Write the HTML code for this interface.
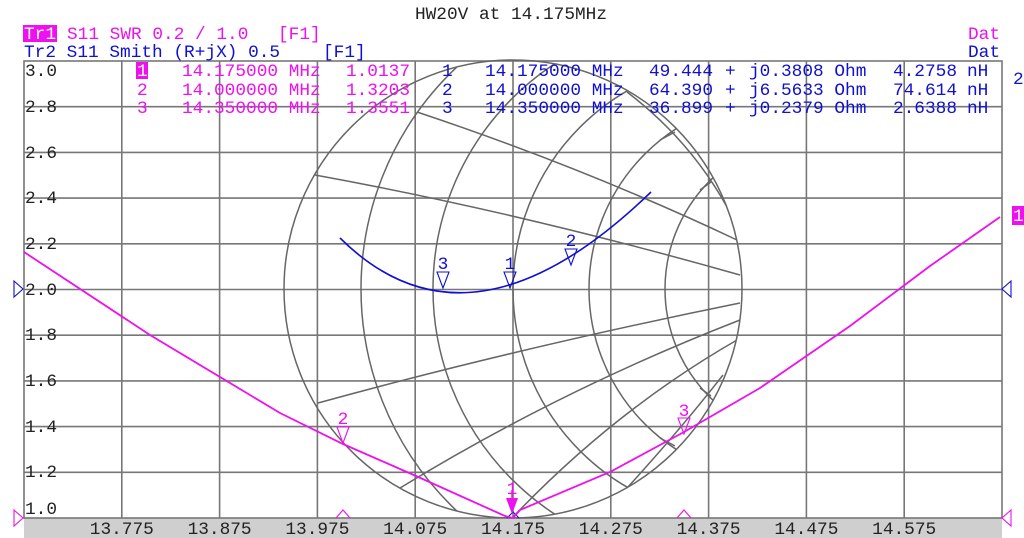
<!DOCTYPE html>
<html><head><meta charset="utf-8"><style>
html,body{margin:0;padding:0;background:#fff;overflow:hidden;}
body{width:1024px;height:538px;overflow:hidden;position:relative;}
svg{position:absolute;left:0;top:0;display:block;overflow:hidden;}
text{font-family:"Liberation Mono",monospace;font-size:17.8px;white-space:pre;}
</style></head><body>
<svg width="1024" height="538" viewBox="0 0 1024 538" xmlns="http://www.w3.org/2000/svg">
<defs><clipPath id="uc"><circle cx="513" cy="289" r="229"/></clipPath></defs>
<rect x="24" y="518" width="978" height="20" fill="#cfcfcf"/>
<g stroke="#777" stroke-width="1.6" fill="none">
<rect x="24" y="61" width="978" height="457"/>
<path d="M24 106.7H1002M24 152.4H1002M24 198.1H1002M24 243.8H1002M24 289.5H1002M24 335.2H1002M24 380.9H1002M24 426.6H1002M24 472.3H1002"/>
<path d="M121.8 61V518M219.6 61V518M317.4 61V518M415.2 61V518M513 61V518M610.8 61V518M708.6 61V518M806.4 61V518M904.2 61V518"/>
</g>
<g stroke="#666" stroke-width="1.5" fill="none">
<circle cx="513" cy="289" r="229"/>
<g clip-path="url(#uc)">
<circle cx="666" cy="289" r="305"/>
<circle cx="702" cy="289" r="269"/>
<circle cx="742" cy="289" r="229"/>
<circle cx="780" cy="289" r="191"/>
<circle cx="818" cy="289" r="153"/>
<path d="M315 175 Q518 212 740 275"/>
<path d="M417 112 Q585 168 737 240"/>
<path d="M627 92 Q690 140 727 207"/>
<path d="M318 403 Q518 348 740 303"/>
<path d="M400 488 Q560 390 740 320"/>
<path d="M513 517 Q615 410 737 340"/>
<path d="M627 488 Q680 430 723 375"/>
<path d="M660 140 L675 132M700 190 L711 182M660 438 L675 446M700 388 L711 396"/>
</g>
</g>
<path d="M340 238 Q470 367 651 192" stroke="#1010d0" stroke-width="1.6" fill="none"/>
<g stroke="#1010d0" stroke-width="1.1" fill="none">
<path d="M437 272 L449 272 L443 288Z"/>
<path d="M504 272 L516 272 L510 288Z"/>
<path d="M565 249 L577 249 L571 265Z"/>
<path d="M14 281 L23 289 L14 297Z"/>
<path d="M1011 281 L1002 289 L1011 297Z"/>
<path d="M507 518 L513 512 L519 518"/>
</g>
<g fill="#1010d0" text-anchor="middle"><text x="443" y="269">3</text><text x="510" y="269">1</text><text x="571" y="246">2</text></g>
<polyline points="24,252 150,335 280,413 343,444 416,476 505,516 513,518 520,510 610,472 684,432 760,388 850,326 930,266 1000,217" stroke="#ee10ee" stroke-width="1.8" fill="none"/>
<g stroke="#ee10ee" stroke-width="1.1" fill="none">
<path d="M337 427 L349 427 L343 443Z"/>
<path d="M678 418 L690 418 L684 434Z"/>
<path d="M14 510 L23 518 L14 526Z"/>
<path d="M1011 510 L1002 518 L1011 526Z"/>
<path d="M336 518 L343 510 L350 518"/>
<path d="M677 518 L684 510 L691 518"/>
</g>
<path d="M506 498 L518 498 L512 514Z" fill="#ee10ee"/>
<line x1="512" y1="490" x2="512" y2="498" stroke="#ee10ee" stroke-width="1.5"/>
<g fill="#ee10ee" text-anchor="middle"><text x="343" y="424">2</text><text x="684" y="416">3</text><text x="512" y="494" font-size="14">1</text></g>
<rect x="1012" y="206" width="12" height="19" fill="#ee10ee"/>
<text x="1013" y="221" fill="#fff">1</text>
<text x="1013" y="84" fill="#1010d0">2</text>
<g fill="#222">
<text x="25" y="76">3.0</text><text x="25" y="112">2.8</text><text x="25" y="158">2.6</text><text x="25" y="203">2.4</text><text x="25" y="249">2.2</text><text x="25" y="295">2.0</text><text x="25" y="340">1.8</text><text x="25" y="386">1.6</text><text x="25" y="432">1.4</text><text x="25" y="477">1.2</text><text x="25" y="514">1.0</text>
</g>
<g fill="#222" text-anchor="middle">
<text x="121.8" y="534">13.775</text><text x="219.6" y="534">13.875</text><text x="317.4" y="534">13.975</text><text x="415.2" y="534">14.075</text><text x="513" y="534">14.175</text><text x="610.8" y="534">14.275</text><text x="708.6" y="534">14.375</text><text x="806.4" y="534">14.475</text><text x="904.2" y="534">14.575</text>
</g>
<text x="511" y="19" fill="#222" text-anchor="middle">HW20V at 14.175MHz</text>
<rect x="23" y="25" width="34" height="17" fill="#ee10ee"/>
<text x="24" y="39" fill="#fff">Tr1</text>
<g fill="#ee10ee"><text x="67" y="39">S11 SWR 0.2 / 1.0</text><text x="278" y="39">[F1]</text></g>
<g fill="#1010d0"><text x="24" y="57">Tr2 S11 Smith (R+jX) 0.5</text><text x="323" y="57">[F1]</text></g>
<text x="968" y="39" fill="#ee10ee">Dat</text>
<text x="968" y="57" fill="#1010d0">Dat</text>
<rect x="136" y="62" width="12" height="17" fill="#ee10ee"/>
<text x="137" y="76" fill="#fff">1</text>
<g fill="#ee10ee">
<text x="182" y="76">14.175000 MHz</text><text x="410" y="76" text-anchor="end">1.0137</text>
<text x="137" y="95">2</text><text x="182" y="95">14.000000 MHz</text><text x="410" y="95" text-anchor="end">1.3203</text>
<text x="137" y="113">3</text><text x="182" y="113">14.350000 MHz</text><text x="410" y="113" text-anchor="end">1.3551</text>
</g>
<g fill="#1010d0">
<text x="442" y="76">1</text><text x="485" y="76">14.175000 MHz</text><text x="649" y="76">49.444</text><text x="725" y="76">+</text><text x="749" y="76">j0.3808 Ohm</text><text x="957" y="76" text-anchor="end">4.2758</text><text x="967" y="76">nH</text>
<text x="442" y="95">2</text><text x="485" y="95">14.000000 MHz</text><text x="649" y="95">64.390</text><text x="725" y="95">+</text><text x="749" y="95">j6.5633 Ohm</text><text x="957" y="95" text-anchor="end">74.614</text><text x="967" y="95">nH</text>
<text x="442" y="113">3</text><text x="485" y="113">14.350000 MHz</text><text x="649" y="113">36.899</text><text x="725" y="113">+</text><text x="749" y="113">j0.2379 Ohm</text><text x="957" y="113" text-anchor="end">2.6388</text><text x="967" y="113">nH</text>
</g>
</svg>
</body></html>
